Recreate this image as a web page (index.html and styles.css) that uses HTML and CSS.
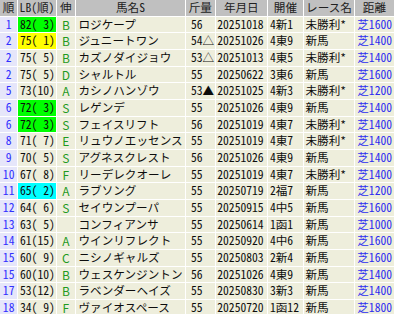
FILE: index.html
```html
<!DOCTYPE html>
<html lang="ja">
<head>
<meta charset="utf-8">
<link rel="stylesheet" href="styles.css">
</head>
<body>
<div class="sheet">
  <div class="h">順</div><div class="h">LB(順)</div><div class="h">伸</div><div class="h">馬名S</div><div class="h">斤量</div><div class="h">年月日</div><div class="h">開催</div><div class="h">レース名</div><div class="h">距離</div>

  <div class="c n">1</div><div class="c lb g">82(&#x2002;3)</div><div class="c nb">B</div><div class="c nm">ロジケープ</div><div class="c kn">56</div><div class="c dt">20251018</div><div class="c kk">4新1</div><div class="c rc">未勝利*</div><div class="c ds">芝1600</div>
  <div class="c n">2</div><div class="c lb y">75(&#x2002;1)</div><div class="c nb">B</div><div class="c nm">ジュニートワン</div><div class="c kn">54△</div><div class="c dt">20251026</div><div class="c kk">4東9</div><div class="c rc">新馬</div><div class="c ds">芝1400</div>
  <div class="c n">2</div><div class="c lb">75(&#x2002;5)</div><div class="c nb">B</div><div class="c nm">カズノダイジョウ</div><div class="c kn">53△</div><div class="c dt">20251013</div><div class="c kk">4東5</div><div class="c rc">未勝利*</div><div class="c ds">芝1400</div>
  <div class="c n">2</div><div class="c lb">75(&#x2002;5)</div><div class="c nb">D</div><div class="c nm">シャルトル</div><div class="c kn">55</div><div class="c dt">20250622</div><div class="c kk">3東6</div><div class="c rc">新馬</div><div class="c ds">芝1600</div>
  <div class="c n">5</div><div class="c lb">73(10)</div><div class="c nb">A</div><div class="c nm">カシノハンゾウ</div><div class="c kn">53▲</div><div class="c dt">20251025</div><div class="c kk">4新3</div><div class="c rc">未勝利*</div><div class="c ds">芝1200</div>
  <div class="c n">6</div><div class="c lb g">72(&#x2002;3)</div><div class="c nb">S</div><div class="c nm">レゲンデ</div><div class="c kn">55</div><div class="c dt">20251026</div><div class="c kk">4東9</div><div class="c rc">新馬</div><div class="c ds">芝1400</div>
  <div class="c n">6</div><div class="c lb g">72(&#x2002;3)</div><div class="c nb">S</div><div class="c nm">フェイスリフト</div><div class="c kn">56</div><div class="c dt">20251019</div><div class="c kk">4東7</div><div class="c rc">未勝利*</div><div class="c ds">芝1400</div>
  <div class="c n">8</div><div class="c lb">71(&#x2002;7)</div><div class="c nb">E</div><div class="c nm">リュウノエッセンス</div><div class="c kn">55</div><div class="c dt">20251019</div><div class="c kk">4東7</div><div class="c rc">未勝利*</div><div class="c ds">芝1400</div>
  <div class="c n">9</div><div class="c lb">70(&#x2002;5)</div><div class="c nb">S</div><div class="c nm">アグネスクレスト</div><div class="c kn">56</div><div class="c dt">20251026</div><div class="c kk">4東9</div><div class="c rc">新馬</div><div class="c ds">芝1400</div>
  <div class="c n">10</div><div class="c lb">67(&#x2002;8)</div><div class="c nb">F</div><div class="c nm">リーデレクオーレ</div><div class="c kn">55</div><div class="c dt">20251019</div><div class="c kk">4東7</div><div class="c rc">未勝利*</div><div class="c ds">芝1400</div>
  <div class="c n">11</div><div class="c lb cy">65(&#x2002;2)</div><div class="c nb">A</div><div class="c nm">ラブソング</div><div class="c kn">55</div><div class="c dt">20250719</div><div class="c kk">2福7</div><div class="c rc">新馬</div><div class="c ds">芝1200</div>
  <div class="c n">12</div><div class="c lb">64(&#x2002;6)</div><div class="c nb">S</div><div class="c nm">セイウンプーパ</div><div class="c kn">55</div><div class="c dt">20250915</div><div class="c kk">4中5</div><div class="c rc">新馬</div><div class="c ds">芝1600</div>
  <div class="c n">13</div><div class="c lb">63(&#x2002;5)</div><div class="c nb"></div><div class="c nm">コンフィアンサ</div><div class="c kn">55</div><div class="c dt">20250614</div><div class="c kk">1函1</div><div class="c rc">新馬</div><div class="c ds">芝1000</div>
  <div class="c n">14</div><div class="c lb">61(15)</div><div class="c nb">A</div><div class="c nm">ウインリフレクト</div><div class="c kn">55</div><div class="c dt">20250920</div><div class="c kk">4中6</div><div class="c rc">新馬</div><div class="c ds">芝1600</div>
  <div class="c n">15</div><div class="c lb">60(&#x2002;9)</div><div class="c nb">C</div><div class="c nm">ニシノギャルズ</div><div class="c kn">55</div><div class="c dt">20250803</div><div class="c kk">2新4</div><div class="c rc">新馬</div><div class="c ds">芝1600</div>
  <div class="c n">15</div><div class="c lb">60(10)</div><div class="c nb">B</div><div class="c nm">ウェスケンジントン</div><div class="c kn">56</div><div class="c dt">20251026</div><div class="c kk">4東9</div><div class="c rc">新馬</div><div class="c ds">芝1400</div>
  <div class="c n">17</div><div class="c lb">53(12)</div><div class="c nb">B</div><div class="c nm">ラベンダーヘイズ</div><div class="c kn">55</div><div class="c dt">20250830</div><div class="c kk">3新3</div><div class="c rc">新馬</div><div class="c ds">芝1400</div>
  <div class="c n">18</div><div class="c lb">34(&#x2002;9)</div><div class="c nb">F</div><div class="c nm">ヴァイオスペース</div><div class="c kn">55</div><div class="c dt">20250720</div><div class="c kk">1函12</div><div class="c rc">新馬</div><div class="c ds">芝1800</div>
</div>
</body>
</html>
```
FILE: styles.css
```css
html, body {
  margin: 0;
  padding: 0;
  background: #ffffff;
}

body {
  overflow: hidden;
}

.sheet {
  display: grid;
  grid-template-columns: 17.3px 37.4px 18.3px 109px 28.7px 51.3px 35px 50px 39px;
  grid-auto-rows: 15.67px;
  gap: 1px;
  font-family: "Noto Sans CJK JP", sans-serif;
  font-feature-settings: "hwid";
  font-size: 11.6px;
  line-height: 15.67px;
  color: #0d0d0d;
}

.h, .c {
  white-space: pre;
  overflow: hidden;
}

.h {
  background: #c0c0c0;
  color: #202020;
  text-align: center;
}

.c {
  background: #eeeedc;
}

.n {
  background: #e6e6fa;
  color: #3030ff;
  text-align: center;
}

.lb { padding-left: 1.7px; }
.lb.g { background: #00ff00; }
.lb.y { background: #ffff00; }
.lb.cy { background: #00ffff; }

.nb {
  color: #1f9a1f;
  text-align: center;
  font-feature-settings: normal;
  font-size: 12px;
}

.nm { padding-left: 2.5px; }
.kn { padding-left: 5px; }
.dt { padding-left: 1.6px; }
.kk { padding-left: 2px; }
.rc { padding-left: 1.5px; }

.ds {
  color: #2c2cf0;
  padding-left: 2.3px;
}
```
